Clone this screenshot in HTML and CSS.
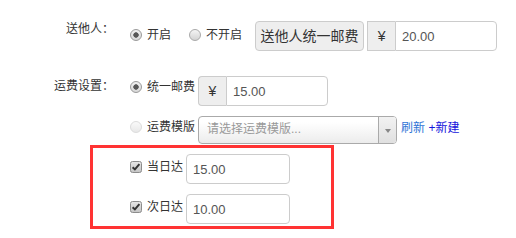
FILE: index.html
```html
<!doctype html>
<html lang="zh">

<head>
    <meta charset="utf-8">
    <link rel="stylesheet" href="styles.css">
</head>

<body>
    <div class="form">

        <div class="row r1">
            <div class="label">送他人：</div>
            <label class="opt"><span class="radio on"></span>开启</label>
            <label class="opt opt_next"><span class="radio"></span>不开启</label>
            <span class="btn">送他人统一邮费</span>
            <div class="group">
                <span class="addon">¥</span>
                <input class="field" value="20.00">
            </div>
        </div>

        <div class="row r2">
            <div class="label">运费设置：</div>
            <label class="opt"><span class="radio on"></span>统一邮费</label>
            <div class="group">
                <span class="addon addon_round">¥</span>
                <input class="field" value="15.00">
            </div>
        </div>

        <div class="row r3">
            <div class="label"></div>
            <label class="opt"><span class="radio off"></span>运费模版</label>
            <div class="select">
                <span class="select_text">请选择运费模版...</span>
                <span class="arrow"></span>
            </div>
            <div class="links">
                <a href="#" class="refresh">刷新</a>
                <a href="#" class="create">+新建</a>
            </div>
        </div>

        <!-- highlighted part -->
        <div class="mark">
            <div class="row r4">
                <label class="opt">
                    <svg class="check" width="12" height="12" viewBox="0 0 12 12">
                        <defs>
                            <linearGradient id="cg" x1="0" y1="0" x2="0" y2="1">
                                <stop offset="0" stop-color="#e6e6e6" />
                                <stop offset="1" stop-color="#c4c4c4" />
                            </linearGradient>
                        </defs>
                        <rect x="0.5" y="0.5" width="11" height="11" rx="2" fill="url(#cg)" stroke="#8c8c8c" />
                        <path d="M2.6 6.2 L4.9 8.4 L9.4 3.2" fill="none" stroke="#333" stroke-width="2" />
                    </svg>当日达</label>
                <input class="field solo" value="15.00">
            </div>
            <div class="row r5">
                <label class="opt">
                    <svg class="check" width="12" height="12" viewBox="0 0 12 12">
                        <rect x="0.5" y="0.5" width="11" height="11" rx="2" fill="url(#cg)" stroke="#8c8c8c" />
                        <path d="M2.6 6.2 L4.9 8.4 L9.4 3.2" fill="none" stroke="#333" stroke-width="2" />
                    </svg>次日达</label>
                <input class="field solo" value="10.00">
            </div>
        </div>

    </div>
</body>

</html>
```

FILE: styles.css
```css
* {
    box-sizing: border-box;
}

body {
    margin: 0;
    background: #fff;
    color: #333;
    font: 12px/16px "Liberation Sans", "Noto Sans CJK SC", sans-serif;
}

.row {
    display: flex;
    align-items: flex-start;
    height: 30px;
}

.r1 {
    margin-top: 21px;
}

.r2 {
    margin-top: 25px;
}

.r3 {
    margin-top: 10px;
    height: 28px;
}

.r5 {
    margin-top: 10px;
}

.label {
    width: 114px;
    margin-right: 16px;
    text-align: right;
    white-space: nowrap;
}

.r2 .label {
    margin-top: 2px;
}

/* radio / checkbox + text */
.opt {
    display: flex;
    align-items: center;
    height: 16px;
    white-space: nowrap;
}

.r1 .opt {
    margin-top: 6px;
}

.r2 .opt {
    margin-top: 3px;
}

.r3 .opt {
    margin-top: 3px;
}

.r4 .opt,
.r5 .opt {
    margin-top: 5px;
}

.opt_next {
    margin-left: 18px;
}

.radio {
    width: 12px;
    height: 12px;
    margin-right: 5px;
    border-radius: 50%;
    border: 1px solid #a9a9a9;
    background: linear-gradient(#f5f5f5, #d3d3d3);
}

.radio.on {
    background: radial-gradient(circle, #575757 0 2.4px, transparent 3px), linear-gradient(#f0f0f0, #d8d8d8);
    border-color: #9a9a9a;
}

.radio.off {
    border-color: #dcdcdc;
    background: linear-gradient(#fafafa, #e8e8e8);
}

.check {
    display: block;
    margin-right: 5px;
}

/* inputs */
.btn {
    width: 109px;
    height: 30px;
    margin-left: 13px;
    border: 1px solid #ccc;
    border-radius: 4px;
    background: #eee;
    font-size: 14px;
    line-height: 28px;
    text-align: center;
}

.group {
    display: flex;
    margin-left: 3px;
}

.addon {
    width: 28px;
    height: 30px;
    border: 1px solid #ccc;
    border-right: 0;
    background: #eee;
    font-size: 14px;
    line-height: 28px;
    text-align: center;
}

.addon_round {
    border-radius: 4px 0 0 4px;
}

.field {
    width: 102px;
    height: 30px;
    margin: 0;
    padding: 0 6px;
    border: 1px solid #ccc;
    border-radius: 0 4px 4px 0;
    color: #555;
    font: 13px "Liberation Sans", sans-serif;
    outline: none;
}

.field.solo {
    width: 104px;
    margin-left: 3px;
    border-radius: 4px;
}

.select {
    display: flex;
    width: 199px;
    height: 28px;
    margin-left: 3px;
    border: 1px solid #aaa;
    border-radius: 4px;
    background: linear-gradient(#fff 20%, #ececec);
    color: #999;
    overflow: hidden;
}

.select_text {
    flex: 1;
    padding-left: 8px;
    line-height: 24px;
}

.arrow {
    width: 18px;
    border-left: 1px solid #aaa;
    background: linear-gradient(#f2f2f2, #e0e0e0) no-repeat,
        #eee;
    display: flex;
    align-items: center;
    justify-content: center;
}

.arrow::before {
    content: '';
    margin-top: 2px;
    border-top: 4px solid #888;
    border-left: 3px solid transparent;
    border-right: 3px solid transparent;
}

.links {
    margin: 4px 0 0 4px;
    white-space: nowrap;
}

.links a {
    text-decoration: none;
}

.refresh {
    color: #2f74d6;
}

.create {
    color: #1414dc;
}

/* red frame around the delivery rows */
.mark {
    width: 244px;
    margin: 1px 0 0 90px;
    padding: 6px 0 2px 37px;
    border: 3px solid #f33;
}
```
